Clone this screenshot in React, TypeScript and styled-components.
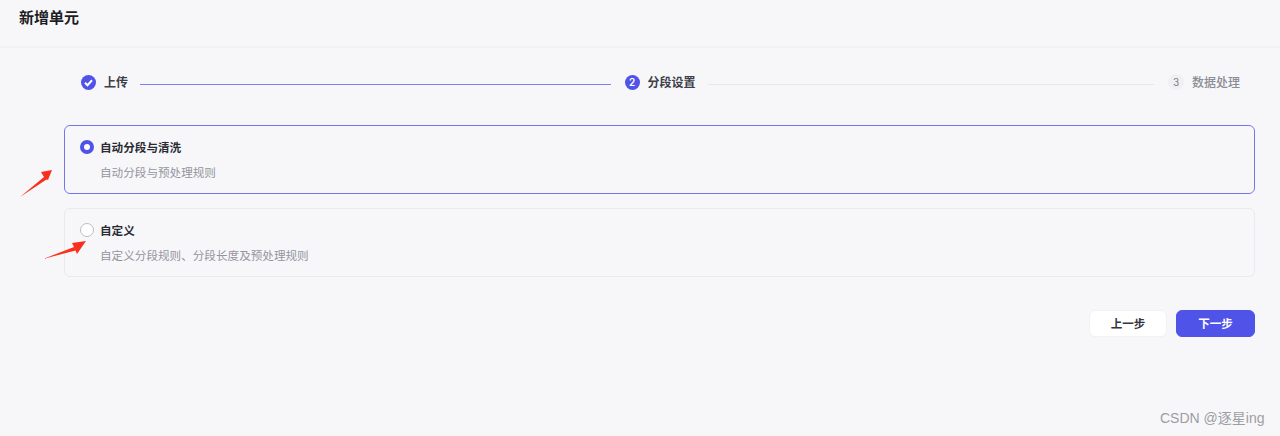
import React from "react";
import styled, { createGlobalStyle } from "styled-components";

const GlobalStyle = createGlobalStyle`
    html, body {
        margin: 0;
        padding: 0;
    }
    body {
        font-family: Inter, "Noto Sans CJK SC", sans-serif;
        background: #f7f7fa;
    }
    * {
        box-sizing: border-box;
    }
`;

const options = [
    { title: "自动分段与清洗", desc: "自动分段与预处理规则", active: true },
    { title: "自定义", desc: "自定义分段规则、分段长度及预处理规则", active: false },
];

const App: React.FC = () => (
    <Page>
        <GlobalStyle />
        <Header>
            <Title>新增单元</Title>
        </Header>
        <Steps>
            <Step>
                <Check width="15" height="15" viewBox="0 0 15 15">
                    <circle cx="7.5" cy="7.5" r="7.5" fill="#4f53e8" />
                    <path d="M4 7.7 6.5 10.2 11 5.3" fill="none" stroke="#fff" strokeWidth="2" />
                </Check>
                <StepLabel $state="done">上传</StepLabel>
                <StepLine $done />
            </Step>
            <Step>
                <StepNumber $current>2</StepNumber>
                <StepLabel $state="current">分段设置</StepLabel>
                <StepLine />
            </Step>
            <LastStep>
                <StepNumber>3</StepNumber>
                <StepLabel $state="todo">数据处理</StepLabel>
            </LastStep>
        </Steps>
        <Options>
            {options.map((option) => (
                <OptionCard key={option.title} $active={option.active}>
                    <OptionHead>
                        <Radio $active={option.active} />
                        <OptionTitle>{option.title}</OptionTitle>
                    </OptionHead>
                    <OptionDesc>{option.desc}</OptionDesc>
                </OptionCard>
            ))}
        </Options>
        <Footer>
            <Button>上一步</Button>
            <Button $primary>下一步</Button>
        </Footer>
        <ArrowOne width="34" height="32" viewBox="0 0 34 32">
            <path d="M0 31 24 11 21 6 32 4 28 14 26.500 13.500Z" fill="#f9301e" />
        </ArrowOne>
        <ArrowTwo width="44" height="24" viewBox="0 0 44 24">
            <path d="M0 22 31 10 29 6 43 4 34 17 32.500 13.500Z" fill="#f9301e" />
        </ArrowTwo>
        <Watermark>CSDN @逐星ing</Watermark>
    </Page>
);

export default App;

const Page = styled.div`
    position: relative;
    height: 436px;
    overflow: hidden;
    background: #f7f7fa;
`;

const Header = styled.header`
    height: 48px;
    padding: 8px 19px 0;
    border-bottom: 2px solid #f2f2f5;
`;

const Title = styled.h1`
    margin: 0;
    font-size: 15px;
    line-height: 20px;
    font-weight: 700;
    color: #1c1d23;
`;

const Steps = styled.div`
    display: flex;
    align-items: center;
    height: 20px;
    margin: 24px 40px 0 81px;
`;

const Step = styled.div`
    display: flex;
    flex: 1;
    align-items: center;
    gap: 8px;
`;

const LastStep = styled(Step)`
    flex: none;
`;

const Check = styled.svg`
    display: block;
    flex: none;
`;

const StepNumber = styled.span<{ $current?: boolean }>`
    display: flex;
    flex: none;
    align-items: center;
    justify-content: center;
    width: ${(p) => (p.$current ? 15 : 16)}px;
    height: ${(p) => (p.$current ? 15 : 16)}px;
    border-radius: 50%;
    font-size: 10px;
    font-weight: ${(p) => (p.$current ? 600 : 400)};
    color: ${(p) => (p.$current ? "#fff" : "#7c7e88")};
    background: ${(p) => (p.$current ? "#4f53e8" : "#f0f0f3")};
`;

const labelColors = {
    done: "#3d3e47",
    current: "#3d3e47",
    todo: "#8b8c95",
};

const StepLabel = styled.span<{ $state: keyof typeof labelColors }>`
    flex: none;
    padding-top: 2px;
    font-size: 12px;
    line-height: 20px;
    font-weight: ${(p) => (p.$state === "todo" ? 500 : 600)};
    color: ${(p) => labelColors[p.$state]};
`;

const StepLine = styled.div<{ $done?: boolean }>`
    flex: 1;
    height: 1px;
    margin: 4px 14px 0 4px;
    background: ${(p) => (p.$done ? "#7d80ee" : "#e6e6ea")};
`;

const Options = styled.div`
    display: flex;
    flex-direction: column;
    gap: 14px;
    margin: 33px 25px 0 64px;
`;

const OptionCard = styled.div<{ $active: boolean }>`
    height: 69px;
    padding: 12px 15px 0;
    border: 1px solid ${(p) => (p.$active ? "#7377ee" : "#eaeaee")};
    border-radius: 6px;
`;

const OptionHead = styled.div`
    display: flex;
    align-items: center;
    gap: 6px;
    height: 18px;
`;

const Radio = styled.span<{ $active: boolean }>`
    flex: none;
    width: 14px;
    height: 14px;
    border-radius: 50%;
    border: ${(p) => (p.$active ? "4.5px solid #4f53e8" : "1px solid #bdbdc2")};
    background: #fff;
`;

const OptionTitle = styled.span`
    padding-top: 2px;
    font-size: 11.6px;
    line-height: 18px;
    font-weight: 700;
    color: #2a2b33;
`;

const OptionDesc = styled.div`
    margin: 8px 0 0 20px;
    font-size: 11.6px;
    line-height: 18px;
    color: #94959c;
`;

const Footer = styled.div`
    display: flex;
    justify-content: flex-end;
    gap: 9px;
    margin: 33px 25px 0 0;
`;

const Button = styled.button<{ $primary?: boolean }>`
    width: ${(p) => (p.$primary ? 79 : 78)}px;
    height: 27px;
    padding: 0 0 2px;
    border: 1px solid ${(p) => (p.$primary ? "#4f53e8" : "#f2f2f5")};
    border-radius: 6px;
    font-family: inherit;
    font-size: 11.5px;
    font-weight: 600;
    color: ${(p) => (p.$primary ? "#fff" : "#33343c")};
    background: ${(p) => (p.$primary ? "#4f53e8" : "#fff")};
`;

const ArrowOne = styled.svg`
    position: absolute;
    left: 20px;
    top: 166px;
`;

const ArrowTwo = styled.svg`
    position: absolute;
    left: 43px;
    top: 237px;
`;

const Watermark = styled.div`
    position: absolute;
    left: 1160px;
    top: 409px;
    font-family: "Liberation Sans", "Noto Sans CJK SC", sans-serif;
    font-size: 14px;
    line-height: 18px;
    white-space: nowrap;
    color: #9d9da1;
`;
